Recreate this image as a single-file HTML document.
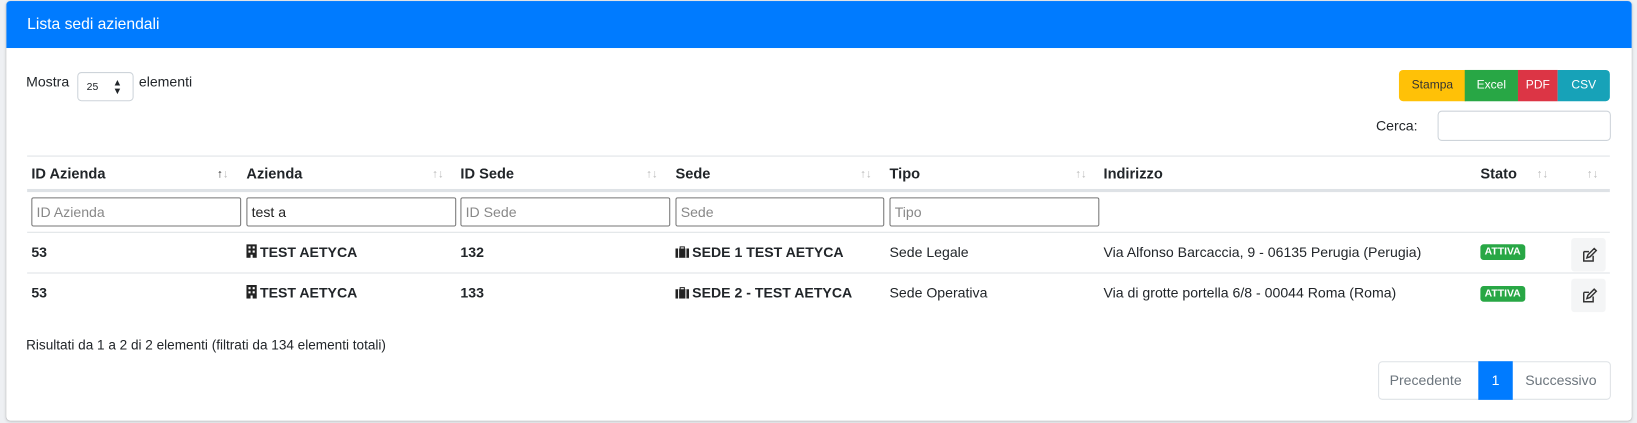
<!DOCTYPE html>
<html><head><meta charset="utf-8"><style>
*{box-sizing:border-box}
body{margin:0;width:1637px;height:423px;background:#eef0f3;font-family:"Liberation Sans",sans-serif;font-size:13.5px;color:#212529;position:relative;overflow:hidden}
.wrap{position:absolute;left:0;top:0;width:1568px;height:405px;transform:scale(1.044);transform-origin:0 0}
.card{position:absolute;left:6px;top:1px;width:1557px;height:402px;background:#fff;border-radius:4px;box-shadow:0 0 1px rgba(0,0,0,.2),0 1px 3px rgba(0,0,0,.15);overflow:hidden}
.hd{position:absolute;left:0;top:0;right:0;height:45px;background:#007bff;color:#fff;font-size:15px;padding:14px 0 0 20px}
.a{position:absolute}
.btn{position:absolute;top:66px;height:30px;font-size:11.5px;line-height:30px;text-align:center;color:#fff}
.inp{position:absolute;border:1px solid #767676;border-radius:2px;height:28px;top:188px;font-size:13.5px;color:#888;padding:6px 4px}
.th{position:absolute;top:157px;font-weight:bold;font-size:14px}
.sort{position:absolute;top:160px;color:#bbb;font-size:11px}
.td{position:absolute;font-size:13.5px}
.b{font-weight:bold}
.badge{position:absolute;left:1412px;background:#28a745;color:#fff;font-size:10px;font-weight:bold;padding:2px 4px;border-radius:3px}
.edit{position:absolute;left:1499px;width:33px;height:32px;background:#f4f5f6;border-radius:3px}
svg.i{vertical-align:-1px;margin-right:3px}
</style></head><body>
<div class="wrap">
<div class="card">
<div class="hd">Lista sedi aziendali</div>
<div class="a" style="left:19px;top:70px;font-size:13.5px">Mostra</div>
<div class="a" style="left:68px;top:68px;width:54px;height:28px;border:1px solid #ced4da;border-radius:4px;font-size:10px;padding:8px 0 0 8px">25 <span style="position:absolute;left:33px;top:5px;font-size:9px;line-height:8px">▲<br>▼</span></div>
<div class="a" style="left:127px;top:70px;font-size:13.5px">elementi</div>
<div class="btn" style="left:1334px;width:64px;background:#ffc107;color:#333;border-radius:4px 0 0 4px">Stampa</div>
<div class="btn" style="left:1397px;width:51px;background:#28a745">Excel</div>
<div class="btn" style="left:1448px;width:38px;background:#dc3545">PDF</div>
<div class="btn" style="left:1486px;width:50px;background:#17a2b8;border-radius:0 4px 4px 0">CSV</div>
<div class="a" style="left:1312px;top:112px;font-size:13.5px">Cerca:</div>
<div class="a" style="left:1371px;top:105px;width:166px;height:29px;border:1px solid #ced4da;border-radius:4px"></div>
<div class="a" style="left:20px;top:148px;width:1516px;border-top:1px solid #dee2e6"></div>
<div class="a" style="left:20px;top:180px;width:1516px;border-top:3px solid #dee2e6"></div>
<div class="th" style="left:24px">ID Azienda</div><div class="sort" style="left:202px;color:#333">↑<span style="color:#bbb">↓</span></div>
<div class="th" style="left:230px">Azienda</div><div class="sort" style="left:408px">↑↓</div>
<div class="th" style="left:435px">ID Sede</div><div class="sort" style="left:613px">↑↓</div>
<div class="th" style="left:641px">Sede</div><div class="sort" style="left:818px">↑↓</div>
<div class="th" style="left:846px">Tipo</div><div class="sort" style="left:1024px">↑↓</div>
<div class="th" style="left:1051px">Indirizzo</div>
<div class="th" style="left:1412px">Stato</div><div class="sort" style="left:1466px">↑↓</div><div class="sort" style="left:1514px">↑↓</div>
<div class="inp" style="left:24px;width:201px">ID Azienda</div>
<div class="inp" style="left:230px;width:201px;color:#222">test a</div>
<div class="inp" style="left:435px;width:201px">ID Sede</div>
<div class="inp" style="left:641px;width:200px">Sede</div>
<div class="inp" style="left:846px;width:201px">Tipo</div>
<div class="a" style="left:20px;top:221px;width:1516px;border-top:1px solid #dee2e6"></div>
<div class="a" style="left:20px;top:260px;width:1516px;border-top:1px solid #dee2e6"></div>
<div class="td b" style="left:24px;top:233px">53</div>
<div class="td b" style="left:230px;top:233px"><svg class="i" width="10" height="13"><path d="M0 0h10v13H6v-3H4v3H0z" fill="#222"/><path d="M2 2h2v2H2zM6 2h2v2H6zM2 6h2v2H2zM6 6h2v2H6z" fill="#fff"/></svg>TEST AETYCA</div>
<div class="td b" style="left:435px;top:233px">132</div>
<div class="td b" style="left:641px;top:233px"><svg class="i" width="13" height="12"><path d="M4 3V1h5v2h4v9H0V3zM5 2v1h3V2z" fill="#222"/><path d="M3 3v9M10 3v9" stroke="#fff" stroke-width="1"/></svg>SEDE 1 TEST AETYCA</div>
<div class="td" style="left:846px;top:233px">Sede Legale</div>
<div class="td" style="left:1051px;top:233px">Via Alfonso Barcaccia, 9 - 06135 Perugia (Perugia)</div>
<div class="badge" style="top:233px">ATTIVA</div>
<div class="edit" style="top:227px"><svg width="33" height="32"><path d="M12 13h5M12 13v9h9v-5M15 19l1-3 6-6 2 2-6 6z" fill="none" stroke="#333" stroke-width="1.4"/></svg></div>
<div class="td b" style="left:24px;top:272px">53</div>
<div class="td b" style="left:230px;top:272px"><svg class="i" width="10" height="13"><path d="M0 0h10v13H6v-3H4v3H0z" fill="#222"/><path d="M2 2h2v2H2zM6 2h2v2H6zM2 6h2v2H2zM6 6h2v2H6z" fill="#fff"/></svg>TEST AETYCA</div>
<div class="td b" style="left:435px;top:272px">133</div>
<div class="td b" style="left:641px;top:272px"><svg class="i" width="13" height="12"><path d="M4 3V1h5v2h4v9H0V3zM5 2v1h3V2z" fill="#222"/><path d="M3 3v9M10 3v9" stroke="#fff" stroke-width="1"/></svg>SEDE 2 - TEST AETYCA</div>
<div class="td" style="left:846px;top:272px">Sede Operativa</div>
<div class="td" style="left:1051px;top:272px">Via di grotte portella 6/8 - 00044 Roma (Roma)</div>
<div class="badge" style="top:273px">ATTIVA</div>
<div class="edit" style="top:266px"><svg width="33" height="32"><path d="M12 13h5M12 13v9h9v-5M15 19l1-3 6-6 2 2-6 6z" fill="none" stroke="#333" stroke-width="1.4"/></svg></div>
<div class="a" style="left:19px;top:322px;font-size:13px">Risultati da 1 a 2 di 2 elementi (filtrati da 134 elementi totali)</div>
<div class="a" style="left:1314px;top:345px;width:223px;height:37px;border:1px solid #dee2e6;border-radius:4px;font-size:13.5px;color:#6c757d">
<span class="a" style="left:10px;top:10px">Precedente</span>
<span class="a" style="left:95px;top:-1px;width:33px;height:37px;background:#007bff;color:#fff;text-align:center;line-height:37px">1</span>
<span class="a" style="left:140px;top:10px">Successivo</span></div>
</div>
</div>
</body></html>
